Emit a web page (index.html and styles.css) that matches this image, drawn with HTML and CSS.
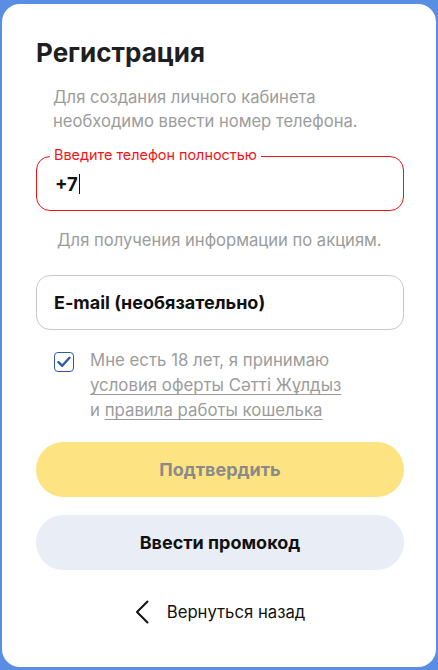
FILE: index.html
```html
<!DOCTYPE html>
<html lang="ru">
<head>
<meta charset="utf-8">
<title>Регистрация</title>
<link rel="stylesheet" href="styles.css">
</head>
<body>
<div class="card">
  <h1 class="title">Регистрация</h1>
  <p class="subtitle">Для создания личного кабинета<br>необходимо ввести номер телефона.</p>

  <div class="field field-error">
    <span class="field-label">Введите телефон полностью</span>
    <span class="field-value">+7<span class="caret"></span></span>
  </div>

  <p class="helper">Для получения информации по акциям.</p>

  <div class="field">
    <span class="field-value">E-mail (необязательно)</span>
  </div>

  <div class="agree">
    <span class="checkbox">
      <svg width="14" height="12" viewBox="0 0 14 12"><path d="M1.5 6.2 L5.2 9.8 L12.5 1.8" fill="none" stroke="#2f5bab" stroke-width="2.4" stroke-linecap="round" stroke-linejoin="round"/></svg>
    </span>
    <p class="agree-text">Мне есть 18 лет, я принимаю<br><a class="link">условия оферты Сәтті Жұлдыз</a><br>и <a class="link">правила работы кошелька</a></p>
  </div>

  <button class="btn btn-primary">Подтвердить</button>
  <button class="btn btn-secondary">Ввести промокод</button>

  <div class="back">
    <svg class="back-icon" width="14" height="24" viewBox="0 0 14 24"><path d="M12.5 1.5 L2 12 L12.5 22.5" fill="none" stroke="#111" stroke-width="2" stroke-linecap="round" stroke-linejoin="round"/></svg>
    <span class="back-text">Вернуться назад</span>
  </div>
</div>
</body>
</html>
```

FILE: styles.css
```css
html, body {
  margin: 0;
  padding: 0;
  background: #5a8ee4;
  font-family: Inter, "Noto Sans", "Liberation Sans", sans-serif;
}
body {
  padding: 4px 2px 3px 2px;
  height: 670px;
  box-sizing: border-box;
}
.card {
  background: #fff;
  border-radius: 18px;
  height: 663px;
  box-sizing: border-box;
  padding: 33px 32px 0 34px;
  display: flex;
  flex-direction: column;
}
.title {
  margin: 0;
  font-size: 26px;
  line-height: 32px;
  font-weight: 700;
  color: #1e1f22;
}
.subtitle {
  margin: 16px 0 0 0;
  padding-left: 17px;
  font-size: 16.6px;
  line-height: 24px;
  color: #9c9c9c;
}
.field {
  position: relative;
  margin-top: 23px;
  height: 55px;
  box-sizing: border-box;
  border: 1px solid #c9c9c9;
  border-radius: 14px;
  display: flex;
  align-items: center;
  padding-left: 17px;
}
.field-error {
  border-color: #f31515;
}
.field-label {
  position: absolute;
  top: -10px;
  left: 13px;
  padding: 0 4px;
  background: #fff;
  font-size: 14.4px;
  line-height: 16px;
  color: #f31515;
}
.field-value {
  font-size: 18px;
  font-weight: 700;
  color: #111;
  display: flex;
  align-items: center;
}
.field-error .field-value {
  font-size: 18.5px;
  padding-left: 1px;
}
.caret {
  display: inline-block;
  width: 1px;
  height: 20px;
  background: #111;
  margin-left: 1px;
}
.helper {
  margin: 17px 0 0 0;
  padding-left: 21px;
  font-size: 16.6px;
  line-height: 24px;
  color: #9c9c9c;
}
.agree {
  margin-top: 18px;
  display: flex;
  align-items: flex-start;
  padding-left: 18px;
  gap: 16px;
}
.checkbox {
  margin-top: 4px;
  width: 20px;
  height: 20px;
  box-sizing: border-box;
  border: 1.5px solid #2f5bab;
  border-radius: 4px;
  display: flex;
  align-items: center;
  justify-content: center;
  flex-shrink: 0;
}
.agree-text {
  margin: 0;
  font-size: 16.8px;
  line-height: 25px;
  color: #9c9c9c;
}
.link {
  color: #9c9c9c;
  text-decoration: underline;
  text-underline-offset: 3px;
}
.btn {
  display: block;
  width: 100%;
  height: 55px;
  border: none;
  border-radius: 28px;
  font-family: inherit;
  font-size: 18px;
  font-weight: 700;
  padding: 0;
}
.btn-primary {
  margin-top: 19px;
  background: #fde381;
  color: #8a8a8a;
}
.btn-secondary {
  margin-top: 18px;
  background: #e9edf5;
  color: #111;
}
.back {
  margin-top: 30px;
  display: flex;
  align-items: center;
  justify-content: center;
  gap: 18px;
  height: 24px;
}
.back-text {
  font-size: 16.7px;
  line-height: 24px;
  color: #111;
}
```
